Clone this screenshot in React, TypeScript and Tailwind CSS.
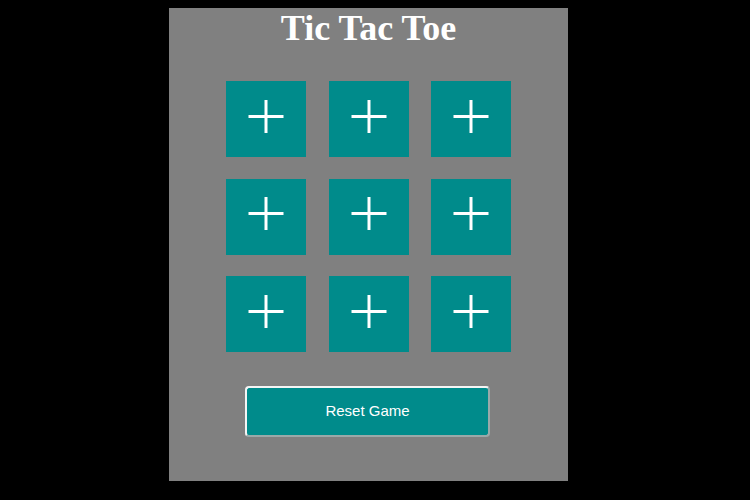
const cells = Array.from({ length: 9 });

function Plus() {
  return (
    <svg width="36" height="34" viewBox="0 0 36 34" aria-hidden="true">
      <line x1="0.5" y1="16.5" x2="35.5" y2="16.5" stroke="white" strokeWidth="3" />
      <line x1="18" y1="0" x2="18" y2="33" stroke="white" strokeWidth="3" />
    </svg>
  );
}

export default function App() {
  return (
    <div className="bg-black h-[500px] w-[750px] pt-[8px] pl-[169px]">
      {/* Game panel */}
      <div className="w-[399px] h-[473px] bg-[#808080] flex flex-col items-center">
        <h1 className="pt-[1.5px] text-[36px] leading-none font-bold text-white font-['Liberation_Serif',serif]">
          Tic Tac Toe
        </h1>

        {/* Board */}
        <div className="mt-[35.5px] grid grid-cols-[80px_80px_80px] gap-x-[22.5px] gap-y-[21.5px]">
          {cells.map((_, i) => (
            <button
              key={i}
              className="w-[80px] h-[76px] bg-[#008b8b] flex items-center justify-center pb-[5px]"
            >
              <Plus />
            </button>
          ))}
        </div>

        {/* Reset */}
        <button className="mt-[34px] mr-[2px] w-[245px] h-[51px] rounded-[4px] bg-[#008b8b] border-2 border-t-[#f4f4f4] border-l-[#f4f4f4] border-r-[#9aa9a9] border-b-[#9aa9a9] text-white text-[15px] font-['Liberation_Sans',Arial,sans-serif]">
          Reset Game
        </button>
      </div>
    </div>
  );
}
